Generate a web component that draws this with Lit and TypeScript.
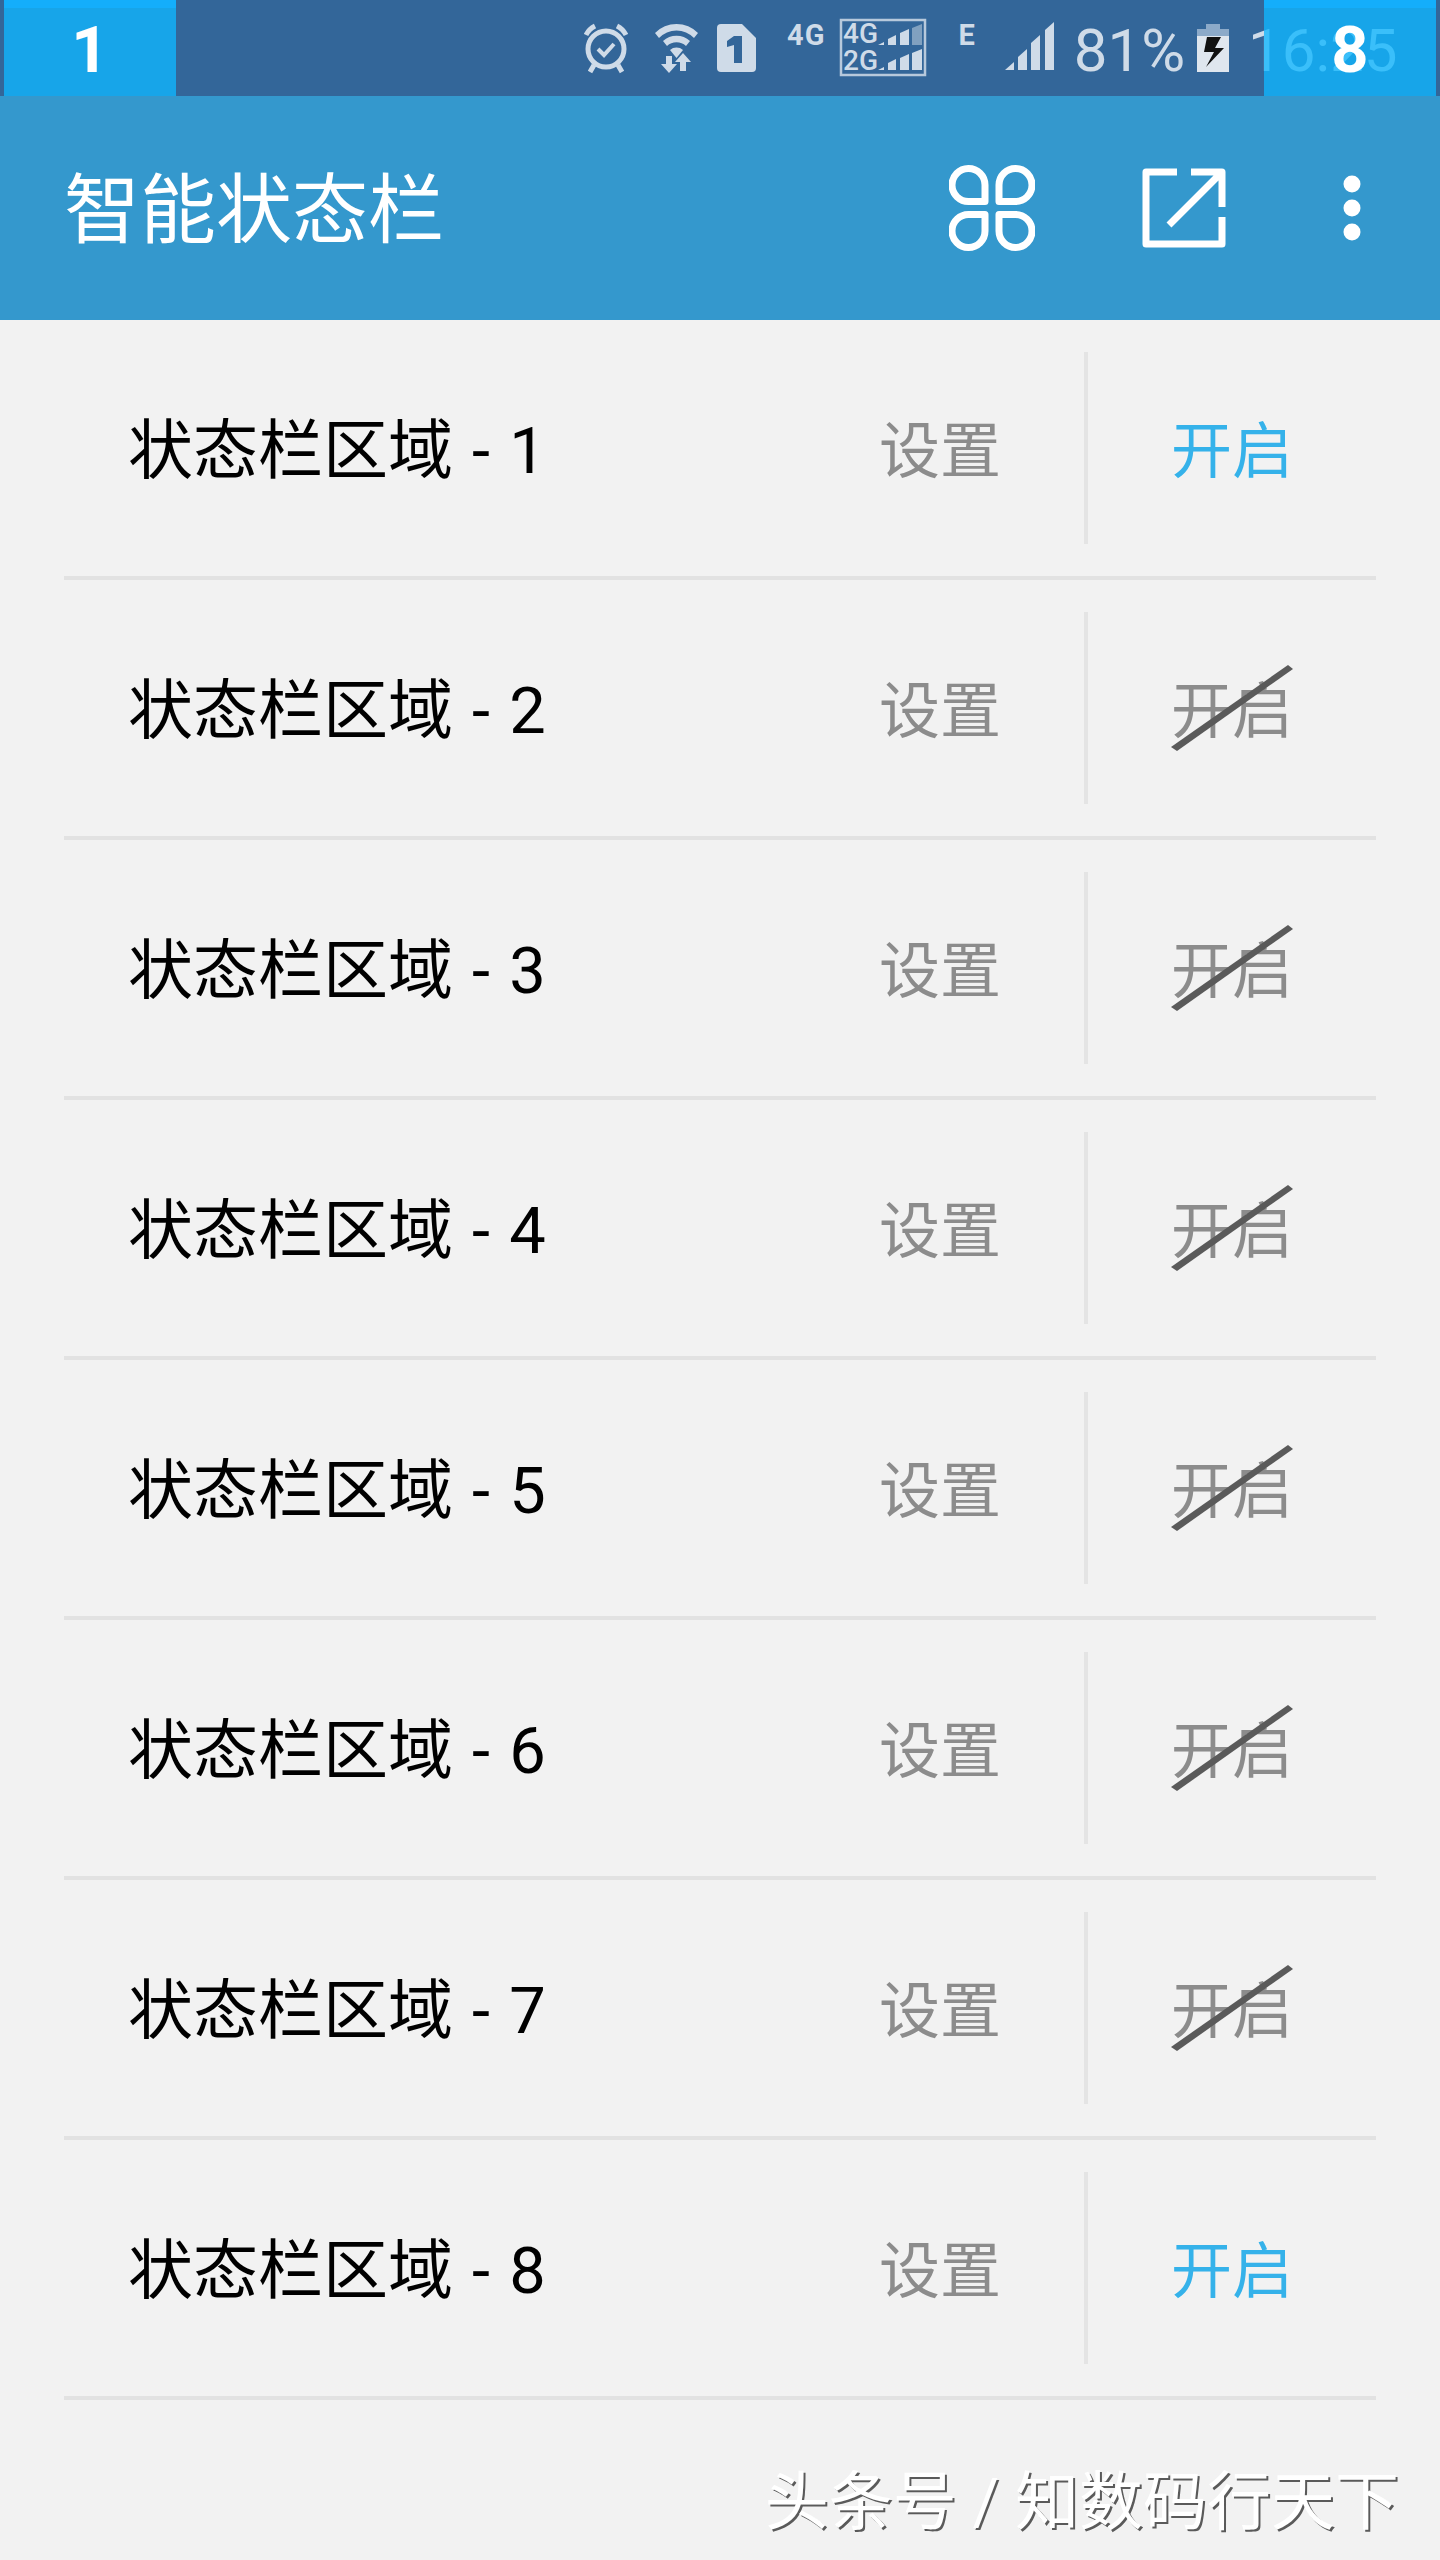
import { LitElement, css, html } from 'lit'
import { customElement, state } from 'lit/decorators.js'

type Slot = { id: number; enabled: boolean }

@customElement('app-root')
export class AppRoot extends LitElement {
  @state() slots: Slot[] = [1, 2, 3, 4, 5, 6, 7, 8].map((id) => ({ id, enabled: id === 1 || id === 8 }))

  static styles = css`
    :host {
      display: block;
      position: relative;
      width: 1440px;
      height: 2560px;
      overflow: hidden;
      background: #f2f2f2;
      font-family: Roboto, 'Noto Sans CJK SC', sans-serif;
    }

    .status {
      height: 96px;
      background: #336699;
      display: flex;
      align-items: flex-start;
      color: #cfdbe8;
      position: relative;
    }

    .status-icons {
      margin-left: 584px;
      display: flex;
      align-items: flex-start;
      height: 96px;
    }

    .status-icons svg {
      display: block;
      flex: none;
    }

    .wifi { margin-left: 27px; }
    .sim { margin-left: 18px; }
    .dual { margin-left: 14px; }
    .signal { margin-left: 30px; }
    .battery { margin-left: 12px; }

    .tiny {
      font-weight: 700;
      line-height: 1;
    }

    .tiny.net {
      margin: 21px 0 0 31px;
      font-size: 29px;
      letter-spacing: 1px;
    }

    .tiny.edge {
      margin: 21px 0 0 31px;
      font-size: 29px;
    }

    .dual text {
      font-size: 28px;
      font-weight: 500;
      font-family: Roboto, sans-serif;
    }

    .battery-pct {
      font-size: 60px;
      line-height: 102px;
      margin-left: 20px;
      height: 96px;
      white-space: nowrap;
    }

    .clock {
      font-size: 60px;
      line-height: 102px;
      margin-left: 19px;
      white-space: nowrap;
    }

    .marker {
      position: absolute;
      top: 0;
      height: 96px;
      background: rgba(15, 183, 255, 0.78);
      color: #fff;
      font-weight: 700;
      font-size: 65px;
      line-height: 101px;
      text-align: center;
    }

    .marker::before {
      content: '';
      position: absolute;
      left: 0;
      right: 0;
      top: 0;
      height: 8px;
      background: #14aefb;
    }

    .marker.left {
      left: 4px;
      width: 172px;
    }

    .marker.right {
      left: 1264px;
      width: 172px;
    }

    .appbar {
      height: 224px;
      background: #3498cd;
      color: #fff;
      display: flex;
      align-items: center;
      padding-left: 64px;
    }

    .appbar h1 {
      margin: 0;
      padding-top: 6px;
      flex: 1;
      font-size: 76px;
      font-weight: 400;
      line-height: 1;
    }

    .appbar svg {
      display: block;
      flex: none;
    }

    .clover { margin-right: 107px; }
    .export { margin-right: 117px; }
    .more { margin-right: 79px; }

    .row {
      margin: 0 64px;
      height: 260px;
      box-sizing: border-box;
      border-bottom: 4px solid #e2e2e2;
      display: flex;
      align-items: center;
    }

    .name {
      flex: 1;
      padding: 0 0 6px 64px;
      font-size: 65px;
      word-spacing: 3px;
      color: #000;
    }

    .cell {
      width: 288px;
      padding-bottom: 3px;
      text-align: center;
      font-size: 61px;
      color: #8c8c8c;
      position: relative;
    }

    .cell.on {
      color: #35b2ea;
    }

    .sep {
      width: 4px;
      height: 192px;
      background: #e4e4e4;
    }

    .strike {
      position: absolute;
      left: 82px;
      top: -2px;
      display: block;
    }

    .footer {
      display: flex;
      justify-content: flex-end;
      padding: 67px 41px 0 0;
      font-size: 64px;
      line-height: 72px;
      color: #fff;
      text-shadow: 2px 2px 0 #5a5a5a;
      white-space: nowrap;
    }
  `

  private statusIcons() {
    return html`
      <div class="status-icons">
        <svg width="44" height="96" viewBox="0 0 44 96" fill="none" stroke="currentColor">
          <circle cx="22" cy="49" r="18" stroke-width="5" />
          <path d="M14 49l6 6 10-11" stroke-width="4" />
          <path d="M2 35c2-4 5-7 9-9M42 35c-2-4-5-7-9-9" stroke-width="5" />
          <path d="M10 65l-4 7M34 65l4 7" stroke-width="5" />
        </svg>
        <svg class="wifi" width="44" height="96" viewBox="0 0 44 96" fill="currentColor">
          <path d="M0 33a30 30 0 0 1 43 0l-4 5a24 24 0 0 0-35 0z" />
          <path d="M8 41a20 20 0 0 1 27 0l-4 5a14 14 0 0 0-19 0z" />
          <path d="M15 50a10 10 0 0 1 13 0l-6.500 8z" />
          <path d="M11 56h6v8h5l-8 9-8-9h5zM28 53l8 9h-5v9h-6v-9h-5z" />
        </svg>
        <svg class="sim" width="39" height="96" viewBox="0 0 39 96">
          <path fill="currentColor" d="M4 24h21l14 14v30a4 4 0 0 1-4 4H4a4 4 0 0 1-4-4V28a4 4 0 0 1 4-4z" />
          <path fill="#336699" d="M17 36h8v27h-8V45l-7 2v-6z" />
        </svg>
        <span class="tiny net">4G</span>
        <svg class="dual" width="88" height="96" viewBox="0 0 88 96" fill="currentColor">
          <rect x="2" y="20" width="84" height="55" fill="none" stroke="currentColor" stroke-width="2.500" opacity="0.85" />
          <text x="4" y="43">4G</text>
          <text x="4" y="70">2G</text>
          <path d="M39 45l6-3v3zM49 45v-6l8-4v10zM61 45V33l9-4v16z" />
          <path opacity="0.5" d="M73 45V28l10-4v21z" />
          <path d="M39 70l6-3v3zM49 70v-7l8-4v11zM61 70V58l9-4v16zM73 70V53l10-4v21z" />
        </svg>
        <span class="tiny edge">E</span>
        <svg class="signal" width="49" height="96" viewBox="0 0 49 96" fill="currentColor">
          <path d="M0 70l9-8v8zM13 70V57l9-8v21zM26 70V43l9-8v35zM40 70V30l9-8v48z" />
        </svg>
        <span class="battery-pct">81%</span>
        <svg class="battery" width="32" height="96" viewBox="0 0 32 96">
          <path fill="#8caac9" d="M9 24h14v5h9v7H0v-7h9z" />
          <rect y="36" width="32" height="36" fill="#dfe6ee" />
          <path fill="#111" d="M10 37H24L18 48H27L9 67L17 52H7z" />
        </svg>
        <span class="clock">16:25</span>
      </div>
    `
  }

  private row(slot: Slot) {
    return html`
      <div class="row">
        <div class="name">状态栏区域 - ${slot.id}</div>
        <div class="cell">设置</div>
        <div class="sep"></div>
        <div class="cell ${slot.enabled ? 'on' : ''}">
          开启
          ${slot.enabled
            ? null
            : html`<svg class="strike" width="126" height="96" viewBox="0 0 126 96">
                <polygon points="1,87 7,91 123,9 118,5" fill="#5a5a5a" />
              </svg>`}
        </div>
      </div>
    `
  }

  render() {
    return html`
      <div class="status">
        ${this.statusIcons()}
        <div class="marker left">1</div>
        <div class="marker right">8</div>
      </div>
      <header class="appbar">
        <h1>智能状态栏</h1>
        <svg class="clover" width="86" height="86" viewBox="0 0 86 86" fill="none" stroke="#fff" stroke-width="7">
          <path
            stroke-linejoin="round"
            d="M36 36.500H20A16.500 16.500 0 1 1 36 20zM50 36.500H66A16.500 16.500 0 1 0 50 20zM36 49.500H20A16.500 16.500 0 1 0 36 66zM50 49.500H66A16.500 16.500 0 1 1 50 66z"
          />
        </svg>
        <svg class="export" width="84" height="80" viewBox="0 0 84 80" fill="none" stroke="#fff" stroke-width="7">
          <path stroke-linejoin="round" d="M35 4H4v72h76V49M49 4h31v35M78 6L27 57" />
        </svg>
        <svg class="more" width="18" height="66" viewBox="0 0 18 66" fill="#fff">
          <circle cx="9" cy="9" r="8.500" /><circle cx="9" cy="33" r="8.500" /><circle cx="9" cy="57" r="8.500" />
        </svg>
      </header>
      <main>${this.slots.map((s) => this.row(s))}</main>
      <div class="footer">头条号 / 知数码行天下</div>
    `
  }
}

declare global {
  interface HTMLElementTagNameMap {
    'app-root': AppRoot
  }
}
